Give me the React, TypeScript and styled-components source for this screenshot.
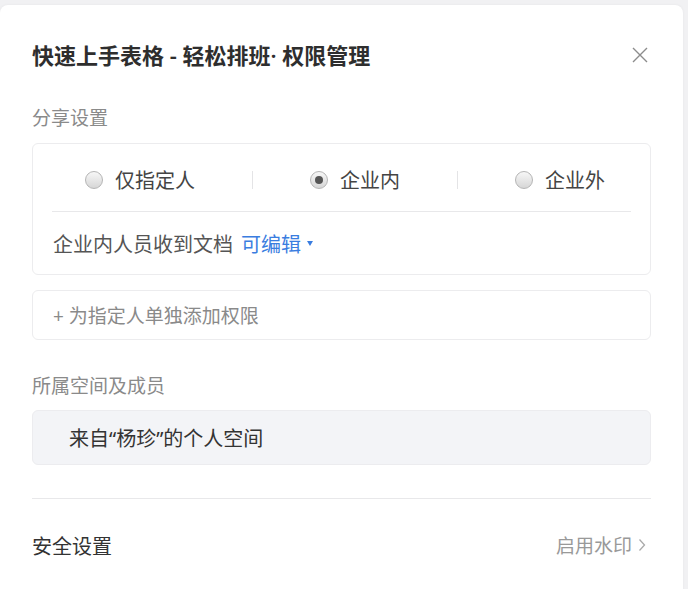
import React from "react";
import styled, { createGlobalStyle } from "styled-components";

const Global = createGlobalStyle`
  html, body { margin: 0; padding: 0; background: #f1f1f3; }
  body { font-family: "Noto Sans", "Noto Sans CJK SC", sans-serif; overflow: hidden; }
  * { box-sizing: border-box; }
`;

const Dialog = styled.div`
  margin-top: 5px;
  width: 683px;
  height: 600px;
  background: #fff;
  border-radius: 8px;
  box-shadow: 0 0 3px rgba(0, 0, 0, 0.05);
  padding: 36px 32px 0 32px;
  display: flex;
  flex-direction: column;
`;

const Header = styled.div`
  display: flex;
  align-items: center;
  justify-content: space-between;
  height: 28px;
  padding-right: 1px;
`;

const Title = styled.div`
  font-size: 22px;
  font-weight: 600;
  color: #2e2e2e;
  line-height: 28px;
  white-space: nowrap;
`;

const Close = styled.button`
  width: 20px;
  height: 20px;
  border: 0;
  background: transparent;
  padding: 0;
  display: flex;
  align-items: center;
  justify-content: center;
  cursor: pointer;
`;

const SectionLabel = styled.div<{ $top: number }>`
  margin-top: ${(p) => p.$top}px;
  font-size: 19px;
  line-height: 24px;
  color: #8a8a8a;
`;

const Card = styled.div<{ $top: number }>`
  margin-top: ${(p) => p.$top}px;
  border: 1px solid #ececee;
  border-radius: 6px;
  background: #fff;
`;

const RadioRow = styled.div`
  height: 68px;
  padding: 4px 26px 0 33px;
  margin: 0 19px;
  display: flex;
  align-items: center;
  justify-content: space-between;
  border-bottom: 1px solid #e8e8ea;
`;

const RadioItem = styled.label`
  display: flex;
  align-items: center;
  gap: 12px;
  font-size: 20px;
  color: #444;
  cursor: pointer;
`;

const RadioCircle = styled.span<{ $checked?: boolean }>`
  flex-shrink: 0;
  width: 18px;
  height: 18px;
  border-radius: 50%;
  border: 1px solid #b5b5b5;
  background: linear-gradient(#f7f7f7, #d6d6d6);
  display: flex;
  align-items: center;
  justify-content: center;
  &::after {
    content: "";
    width: 8px;
    height: 8px;
    border-radius: 50%;
    background: #555;
    display: ${(p) => (p.$checked ? "block" : "none")};
  }
`;

const Sep = styled.span`
  width: 1px;
  height: 18px;
  background: #e4e4e6;
`;

const InfoRow = styled.div`
  height: 62px;
  padding: 0 20px;
  display: flex;
  align-items: center;
  font-size: 20px;
  color: #555;
`;

const Link = styled.span`
  color: #3a7de0;
  margin-left: 8px;
  display: inline-flex;
  align-items: center;
  gap: 6px;
`;

const Caret = styled.span`
  width: 0;
  height: 0;
  border-left: 3.5px solid transparent;
  border-right: 3.5px solid transparent;
  border-top: 5px solid #3a7de0;
`;

const AddRow = styled.div`
  height: 48px;
  padding: 0 20px;
  display: flex;
  align-items: center;
  font-size: 19px;
  color: #8a8a8a;
`;

const SpaceBox = styled.div`
  margin-top: 12px;
  height: 55px;
  border-radius: 6px;
  background: #f3f4f7;
  border: 1px solid #ececef;
  padding: 0 36px;
  display: flex;
  align-items: center;
  font-size: 20px;
  color: #333;
`;

const Divider = styled.div`
  margin-top: 33px;
  height: 1px;
  background: #e8e8ea;
`;

const Footer = styled.div`
  height: 92px;
  display: flex;
  align-items: center;
  justify-content: space-between;
`;

const FooterTitle = styled.div`
  font-size: 20px;
  color: #333;
`;

const FooterAction = styled.div`
  display: flex;
  align-items: center;
  gap: 6px;
  font-size: 19px;
  color: #999;
  padding-right: 5px;
`;

export default function App() {
  return (
    <>
      <Global />
      <Dialog>
        <Header>
          <Title>快速上手表格 - 轻松排班· 权限管理</Title>
          <Close aria-label="close">
            <svg width="18" height="18" viewBox="0 0 18 18">
              <path d="M2 2 L16 16 M16 2 L2 16" stroke="#8c8c8c" strokeWidth="1.4" fill="none" />
            </svg>
          </Close>
        </Header>
        <SectionLabel $top={37}>分享设置</SectionLabel>
        <Card $top={13}>
          <RadioRow>
            <RadioItem>
              <RadioCircle />
              仅指定人
            </RadioItem>
            <Sep />
            <RadioItem>
              <RadioCircle $checked />
              企业内
            </RadioItem>
            <Sep />
            <RadioItem>
              <RadioCircle />
              企业外
            </RadioItem>
          </RadioRow>
          <InfoRow>
            企业内人员收到文档
            <Link>
              可编辑
              <Caret />
            </Link>
          </InfoRow>
        </Card>
        <Card $top={15}>
          <AddRow>+ 为指定人单独添加权限</AddRow>
        </Card>
        <SectionLabel $top={34}>所属空间及成员</SectionLabel>
        <SpaceBox>来自“杨珍”的个人空间</SpaceBox>
        <Divider />
        <Footer>
          <FooterTitle>安全设置</FooterTitle>
          <FooterAction>
            启用水印
            <svg width="8" height="14" viewBox="0 0 8 14">
              <path d="M1.5 1.5 L6.5 7 L1.5 12.5" stroke="#aaa" strokeWidth="1.3" fill="none" />
            </svg>
          </FooterAction>
        </Footer>
      </Dialog>
    </>
  );
}
